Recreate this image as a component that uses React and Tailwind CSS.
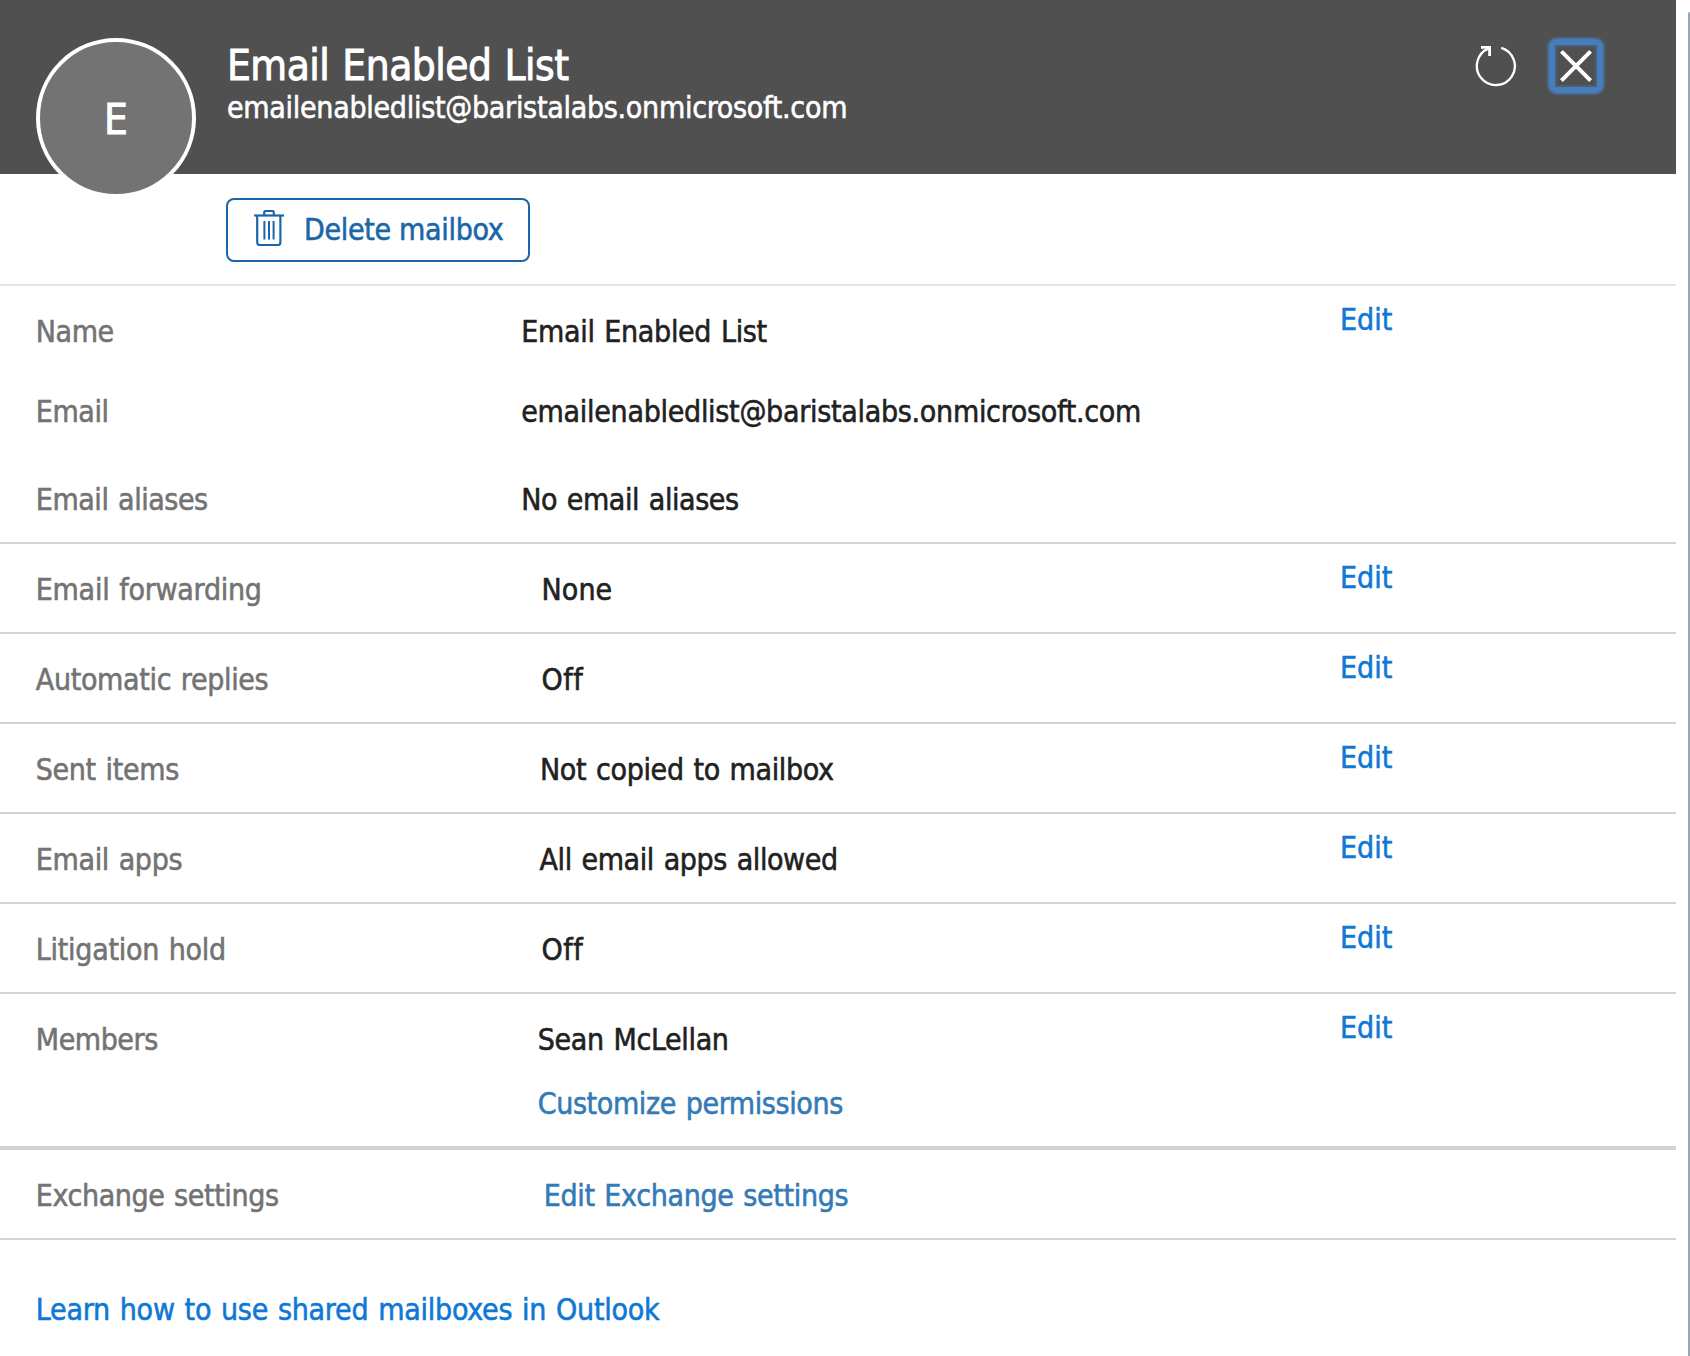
const detailRows = [
  {
    label: "Email forwarding",
    labelClass: "tracking-[-0.26px]",
    value: "None",
    valueClass: "pl-[21.5px] tracking-[0.1px]",
  },
  {
    label: "Automatic replies",
    labelClass: "tracking-[-0.34px]",
    value: "Off",
    valueClass: "pl-[21.5px] tracking-[0.5px]",
  },
  {
    label: "Sent items",
    labelClass: "tracking-[-0.35px]",
    value: "Not copied to mailbox",
    valueClass: "pl-[20px] tracking-[-0.34px]",
  },
  {
    label: "Email apps",
    labelClass: "tracking-[-0.35px]",
    value: "All email apps allowed",
    valueClass: "pl-[19.5px] tracking-[-0.39px]",
  },
  {
    label: "Litigation hold",
    labelClass: "tracking-[-0.28px]",
    value: "Off",
    valueClass: "pl-[21.5px] tracking-[0.5px]",
  },
];

function TrashIcon() {
  return (
    <svg width="30" height="36" viewBox="0 0 30 36" fill="none" stroke="currentColor">
      <path d="M0 5.5H30" strokeWidth="2.2" />
      <path d="M10.2 5V2.6Q10.2 1 11.8 1H18.2Q19.8 1 19.8 2.6V5" strokeWidth="2.2" />
      <path d="M3.2 6V32.6Q3.2 35 5.6 35H24Q26.4 35 26.4 32.6V6" strokeWidth="2.2" />
      <path d="M10.4 11V29.4M15 11V29.4M19.6 11V29.4" strokeWidth="2" />
    </svg>
  );
}

function RefreshIcon() {
  return (
    <svg width="44" height="44" viewBox="0 0 44 44">
      <path d="M27.2 3.8A19 19 0 1 1 14.8 4.4" fill="none" stroke="white" strokeWidth="2.3" />
      <path d="M7 2H17V12H14.2V4.8H7Z" fill="white" />
    </svg>
  );
}

function CloseIcon() {
  return (
    <svg width="38" height="38" viewBox="0 0 38 38" fill="none" stroke="white" strokeWidth="4">
      <path d="M4.4 4.4L33.6 33.6M33.6 4.4L4.4 33.6" />
    </svg>
  );
}

function Row({ label, labelClass = "", className = "h-[88px]", edit = false, children }) {
  return (
    <div className={`flex items-start ${className}`}>
      <div className={`w-[520px] shrink-0 pt-[26px] pl-[35.8px] text-[#737373] ${labelClass}`}>{label}</div>
      <div className="w-[820px] shrink-0 pt-[26px]">{children}</div>
      {edit && (
        <a href="#" className="pt-3.5 text-[#0f78d4]">
          Edit
        </a>
      )}
    </div>
  );
}

export default function App() {
  return (
    <div className="flex h-[1356px] w-[1690px] justify-between overflow-hidden bg-white font-['DejaVu_Sans_Condensed','DejaVu_Sans',sans-serif] text-[30px] leading-10 whitespace-nowrap text-[#212121] [-webkit-text-stroke:0.55px] [word-spacing:1.5px]">
      <main className="w-[1676px]">
        <header className="flex h-[174px] items-start bg-[#505050] text-white">
          <div className="z-10 mt-[38px] ml-9 flex size-40 shrink-0 items-center justify-center rounded-full border-4 border-white bg-[#737373] pt-[3px] text-[42px] [-webkit-text-stroke:0.9px]">
            E
          </div>
          <div className="ml-[31px] flex-1 pt-[43px]">
            <h1 className="text-[42px] leading-[46px] tracking-[-0.5px] [-webkit-text-stroke:0.9px]">Email Enabled List</h1>
            <p className="-mt-px tracking-[-0.28px]">emailenabledlist@baristalabs.onmicrosoft.com</p>
          </div>
          <button aria-label="Refresh" className="mt-11 mr-[29px]">
            <RefreshIcon />
          </button>
          <button
            aria-label="Close"
            className="mt-[37px] mr-[71px] rounded-[10px] border-2 border-[#4b6888]"
          >
            <span className="block rounded-lg border-6 border-[#457fbb]">
              <span className="block border-2 border-[#4b6078]">
                <CloseIcon />
              </span>
            </span>
          </button>
        </header>

        <div className="h-[110px] pt-6 pl-[226px]">
          <button className="flex h-16 w-[304px] items-start rounded-lg border-2 border-[#1a66a9] pt-2.5 pl-[26px] text-[#1a66a9]">
            <TrashIcon />
            <span className="ml-5 tracking-[-0.31px]">Delete mailbox</span>
          </button>
        </div>

        <section className="border-t-2 border-[#e5e5e5]">
          <Row label="Name" labelClass="tracking-[-0.4px]" className="h-20" edit>
            <div className="pl-[1.3px] tracking-[-0.32px]">Email Enabled List</div>
          </Row>
          <Row label="Email" labelClass="tracking-[-0.4px]">
            <div className="pl-[1.3px] tracking-[-0.29px]">emailenabledlist@baristalabs.onmicrosoft.com</div>
          </Row>
          <Row label="Email aliases" labelClass="tracking-[-0.45px]">
            <div className="pl-[1.3px] tracking-[-0.42px]">No email aliases</div>
          </Row>
        </section>

        {detailRows.map((row) => (
          <section key={row.label} className="border-t-2 border-[#d2d2d2]">
            <Row label={row.label} labelClass={row.labelClass} edit>
              <div className={row.valueClass}>{row.value}</div>
            </Row>
          </section>
        ))}

        <section className="border-t-2 border-[#d2d2d2]">
          <Row label="Members" labelClass="tracking-[-0.45px]" className="h-[152px]" edit>
            <div className="flex flex-col gap-6 pl-[17.7px]">
              <div className="tracking-[-0.34px]">Sean McLellan</div>
              <a href="#" className="tracking-[-0.38px] text-[#337ab7]">
                Customize permissions
              </a>
            </div>
          </Row>
        </section>

        <section className="border-t-4 border-b-2 border-[#d2d2d2]">
          <Row label="Exchange settings" labelClass="tracking-[-0.4px]">
            <a href="#" className="pl-[23.7px] tracking-[-0.33px] text-[#337ab7]">
              Edit Exchange settings
            </a>
          </Row>
        </section>

        <div className="pt-[50px] pl-[35.8px]">
          <a href="#" className="tracking-[-0.24px] text-[#0f78d4]">
            Learn how to use shared mailboxes in Outlook
          </a>
        </div>
      </main>
      <div className="mt-3 w-0.5 rounded-tl-sm bg-[#98a6b4]" />
    </div>
  );
}
